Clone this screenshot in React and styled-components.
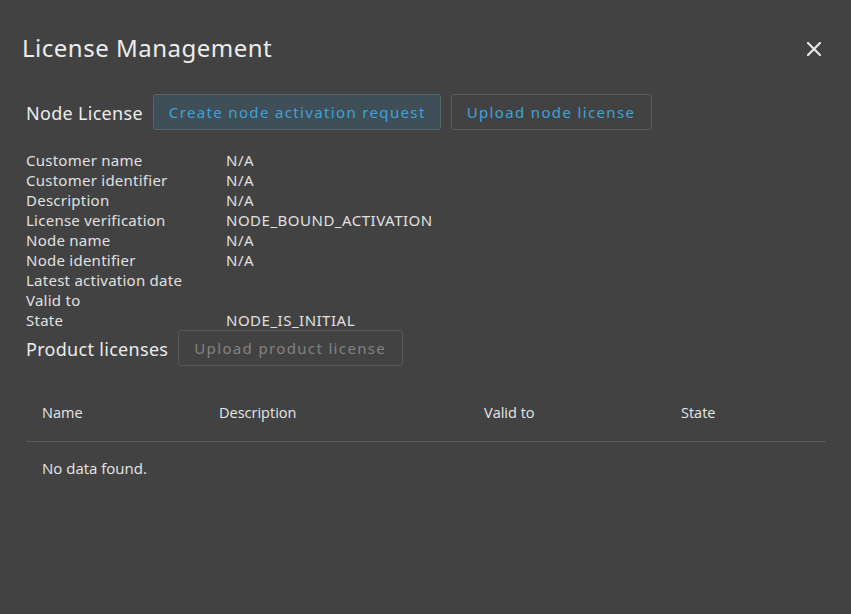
import React from 'react'
import styled, { createGlobalStyle } from 'styled-components'

const GlobalStyle = createGlobalStyle`
    html, body {
        margin: 0;
        padding: 0;
        background: #424242;
    }
`

const nodeRows = [
    ['Customer name', 'N/A'],
    ['Customer identifier', 'N/A'],
    ['Description', 'N/A'],
    ['License verification', 'NODE_BOUND_ACTIVATION'],
    ['Node name', 'N/A'],
    ['Node identifier', 'N/A'],
    ['Latest activation date', ''],
    ['Valid to', ''],
    ['State', 'NODE_IS_INITIAL'],
]

const columns = [
    ['Name', 177],
    ['Description', 265],
    ['Valid to', 197],
    ['State', 161],
]

function CloseIcon() {
    return (
        <svg width="14" height="14" viewBox="0 0 14 14">
            <path d="M1 1 L13 13 M13 1 L1 13" stroke="#e6e6e6" strokeWidth="2.2" strokeLinecap="square" />
        </svg>
    )
}

function App() {
    return (
        <Dialog>
            <GlobalStyle />
            <Header>
                <Title>License Management</Title>
                <CloseButton><CloseIcon /></CloseButton>
            </Header>
            <Body>
                <SectionRow>
                    <SectionTitle>Node License</SectionTitle>
                    <ActionButton $primary>Create node activation request</ActionButton>
                    <ActionButton $wide>Upload node license</ActionButton>
                </SectionRow>
                <InfoGrid>
                    {nodeRows.map(([label, value]) => (
                        <React.Fragment key={label}>
                            <InfoLabel>{label}</InfoLabel>
                            <InfoValue>{value}</InfoValue>
                        </React.Fragment>
                    ))}
                </InfoGrid>
                <SectionRow>
                    <SectionTitle>Product licenses</SectionTitle>
                    <ActionButton $wide disabled>Upload product license</ActionButton>
                </SectionRow>
                <Table>
                    <colgroup>
                        {columns.map(([name, width]) => (
                            <col key={name} style={{ width }} />
                        ))}
                    </colgroup>
                    <thead>
                        <tr>
                            {columns.map(([name]) => (
                                <Th key={name}>{name}</Th>
                            ))}
                        </tr>
                    </thead>
                    <tbody>
                        <tr>
                            <Td colSpan={4}>No data found.</Td>
                        </tr>
                    </tbody>
                </Table>
            </Body>
        </Dialog>
    )
}

export default App

const Dialog = styled.div`
    width: 851px;
    height: 614px;
    background: #424242;
    color: #e6e6e6;
    font-family: "Noto Sans", sans-serif;
    box-sizing: border-box;
`

const Header = styled.div`
    display: flex;
    align-items: center;
    justify-content: space-between;
    padding: 29px 30px 0 22px;
    height: 36px;
`

const Title = styled.h2`
    margin: 0;
    font-size: 24px;
    font-weight: 400;
    color: #ececec;
    letter-spacing: 0.5px;
`

const CloseButton = styled.button`
    background: none;
    border: none;
    padding: 0;
    display: flex;
    margin-top: 4px;
    cursor: pointer;
`

const Body = styled.div`
    padding: 29px 25px 0 26px;
`

const SectionRow = styled.div`
    display: flex;
    align-items: center;
    gap: 10px;
`

const SectionTitle = styled.h3`
    margin: 2px 0 0 0;
    font-size: 18px;
    font-weight: 400;
    letter-spacing: 0.3px;
    color: #ececec;
`

const ActionButton = styled.button`
    height: 36px;
    padding: 0 ${p => (p.$wide ? '16px' : '14px')} 0 15px;
    border-radius: 3px;
    font-family: "Noto Sans", sans-serif;
    font-size: 15px;
    letter-spacing: 1.35px;
    cursor: pointer;
    background: ${p => (p.$primary ? '#3f4e57' : 'transparent')};
    border: 1px solid ${p => (p.$primary ? '#55656d' : '#5c5c5c')};
    color: #3ea3db;

    &:disabled {
        color: #828282;
        border-color: #585858;
        cursor: default;
    }
`

const InfoGrid = styled.div`
    display: grid;
    grid-template-columns: 200px 1fr;
    margin-top: 20px;
    font-size: 15px;
    line-height: 20px;
    color: #e0e0e0;
`

const InfoLabel = styled.div`
    letter-spacing: 0.25px;
`

const InfoValue = styled.div`
    letter-spacing: 0.5px;
`

const Table = styled.table`
    width: 800px;
    margin-top: 19px;
    border-collapse: collapse;
    table-layout: fixed;
    font-family: "Open Sans", sans-serif;
    color: #e6e6e6;
`

const Th = styled.th`
    text-align: left;
    font-weight: 400;
    font-size: 14.5px;
    height: 56px;
    padding: 0 16px;
    box-sizing: border-box;
    border-bottom: 1px solid #5e5e5e;
`

const Td = styled.td`
    padding: 0 16px;
    font-size: 15px;
    height: 52px;
`
